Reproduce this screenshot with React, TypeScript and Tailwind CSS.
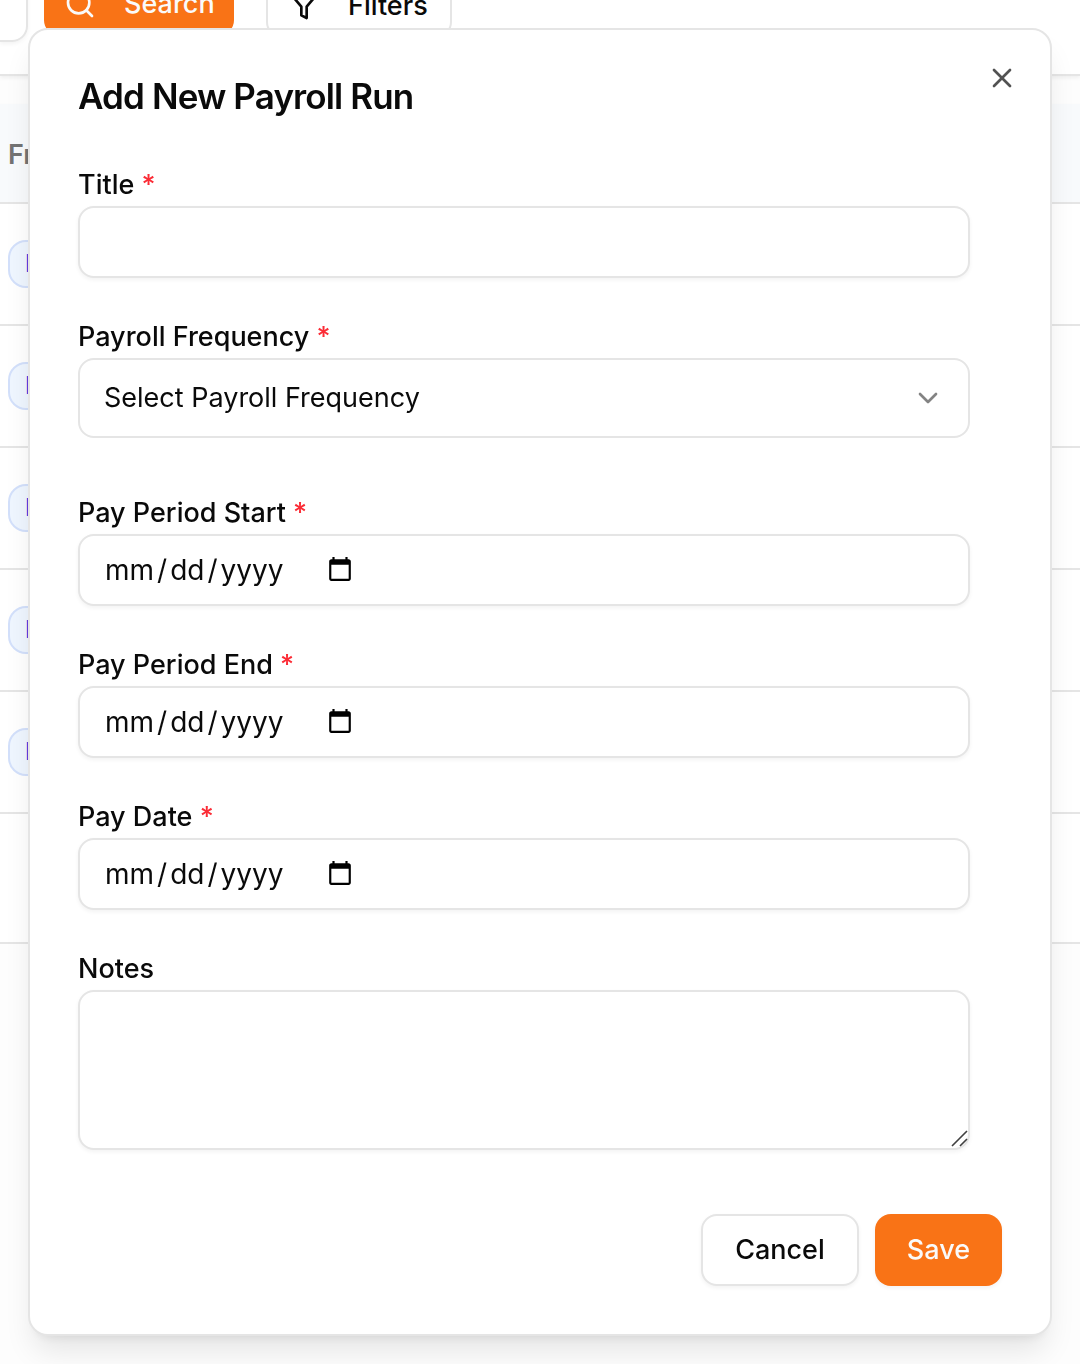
import { useState } from "react";
import type { ReactNode } from "react";
import { ChevronDown, X } from "lucide-react";

const control =
    "w-full rounded-2xl border-2 border-[#e5e5e5] bg-white px-6 text-[27px] text-[#0a0a0a] shadow-[0_2px_4px_rgba(0,0,0,0.05)] outline-none focus:border-orange-400";

const rows = [1, 2, 3, 4, 5];

function Field({ id, label, required, children }: { id: string; label: string; required?: boolean; children: ReactNode }) {
    return (
        <div className="flex flex-col gap-1.5">
            <label htmlFor={id} className="text-[27px] leading-[30px] font-medium">
                {label}
                {required && <span className="text-[#fb2c36]"> *</span>}
            </label>
            {children}
        </div>
    );
}

function DateField({ id, label }: { id: string; label: string }) {
    return (
        <Field id={id} label={label} required>
            <div className={`${control} flex h-18 items-center`}>
                <input
                    id={id}
                    type="date"
                    className="bg-transparent text-[28px] outline-none [&::-webkit-calendar-picker-indicator]:ml-2.5 [&::-webkit-datetime-edit-text]:px-0.5"
                />
            </div>
        </Field>
    );
}

function PayrollPage() {
    return (
        <div className="-mt-8 overflow-hidden">
            <div className="flex h-27 items-start border-b-2 border-[#e5e5e5] bg-white shadow-[0_2px_4px_rgba(0,0,0,0.06)]">
                <input
                    type="search"
                    aria-label="Search payroll runs"
                    className="h-[74px] w-7 rounded-r-2xl border-2 border-l-0 border-[#e5e5e5] shadow-[0_2px_4px_rgba(0,0,0,0.05)]"
                />
                <button type="button" className="ml-4 mt-1 flex h-16 w-[190px] items-center gap-7 rounded-2xl bg-[#f97316] pl-5 text-[27px] font-medium text-[#fafafa]">
                    <svg width="32" height="32" viewBox="0 0 24 24" fill="none" stroke="currentColor" strokeWidth="2" strokeLinecap="round" strokeLinejoin="round">
                        <circle cx="11" cy="11" r="8" />
                        <path d="m21 21-4.3-4.3" />
                    </svg>
                    Search
                </button>
                <button type="button" className="ml-8 mt-1.5 flex h-16 w-[186px] items-center gap-7 rounded-2xl border-2 border-[#e5e5e5] bg-white pl-5 text-[27px] font-medium">
                    <svg width="32" height="32" viewBox="0 0 24 24" fill="none" stroke="currentColor" strokeWidth="2" strokeLinecap="round" strokeLinejoin="round">
                        <polygon points="22 3 2 3 10 12.46 10 19 14 21 14 12.46 22 3" />
                    </svg>
                    Filters
                </button>
            </div>
            <div className="mt-7 border-b-2 border-[#e5e5e5] bg-white pb-32 shadow-[0_2px_4px_rgba(0,0,0,0.06)]">
                <table className="w-full border-collapse text-left">
                    <thead className="bg-[#f8fafc]">
                        <tr className="h-[99px] border-b-2 border-[#e5e5e5]">
                            <th className="px-2 pt-1 text-[27px] font-semibold text-[#737373]">Frequency</th>
                        </tr>
                    </thead>
                    <tbody>
                        {rows.map((r) => (
                            <tr key={r} className="h-[122px] border-b-2 border-[#e5e5e5]">
                                <td className="px-2">
                                    <span className="flex h-12 w-fit items-center rounded-[18px] border-2 border-[#d3e0fb] bg-[#eff6ff] px-[15px] text-2xl font-medium text-[#3b37e0]">
                                        Monthly
                                    </span>
                                </td>
                            </tr>
                        ))}
                    </tbody>
                </table>
            </div>
        </div>
    );
}

export default function App() {
    const [open, setOpen] = useState(true);
    const close = () => setOpen(false);

    return (
        <div className="min-h-screen overflow-hidden bg-[#fdfdfd] font-['Inter',sans-serif] text-[#0a0a0a]">
            <PayrollPage />

            {open && (
                <div className="fixed inset-0 overflow-auto p-7">
                    <div
                        role="dialog"
                        aria-labelledby="dialog-title"
                        className="relative rounded-[20px] border-2 border-[#e5e5e5] bg-white p-12 shadow-[0_20px_30px_-6px_rgba(0,0,0,0.1),0_8px_12px_-8px_rgba(0,0,0,0.1)]"
                    >
                        <button type="button" onClick={close} aria-label="Close" className="absolute top-8 right-8 opacity-70 hover:opacity-100">
                            <X size={32} />
                        </button>

                        <h2 id="dialog-title" className="text-[35px] leading-9 font-semibold tracking-tight">
                            Add New Payroll Run
                        </h2>

                        <form className="mt-14" onSubmit={(e) => e.preventDefault()}>
                            <div className="flex flex-col gap-11 pr-8">
                                <Field id="title" label="Title" required>
                                    <input id="title" type="text" className={`${control} h-18`} />
                                </Field>
                                <div className="pb-4">
                                    <Field id="frequency" label="Payroll Frequency" required>
                                        <div className="relative">
                                            <select id="frequency" className={`${control} h-20 appearance-none shadow-none`}>
                                                <option>Select Payroll Frequency</option>
                                            </select>
                                            <ChevronDown size={32} className="pointer-events-none absolute top-6 right-6.5 opacity-50" />
                                        </div>
                                    </Field>
                                </div>
                                <DateField id="start" label="Pay Period Start" />
                                <DateField id="end" label="Pay Period End" />
                                <DateField id="pay-date" label="Pay Date" />
                                <Field id="notes" label="Notes">
                                    <div className="relative">
                                        <textarea id="notes" className={`${control} block h-40 resize-y py-4 [&::-webkit-resizer]:hidden`} />
                                        <svg className="pointer-events-none absolute right-0.5 bottom-0.5" width="18" height="18" viewBox="0 0 18 18" stroke="#404040" strokeWidth="1.6">
                                            <path d="M2 16 17 1M10 16l7-7" />
                                        </svg>
                                    </div>
                                </Field>
                            </div>

                            <div className="mt-16 flex justify-end gap-4">
                                <button
                                    type="button"
                                    onClick={close}
                                    className="h-18 rounded-2xl border-2 border-[#e5e5e5] bg-white px-8 text-[27px] font-medium shadow-[0_2px_4px_rgba(0,0,0,0.05)]"
                                >
                                    Cancel
                                </button>
                                <button type="submit" className="h-18 rounded-2xl bg-[#f97316] px-8 text-[27px] font-medium text-[#fafafa] shadow-[0_2px_4px_rgba(0,0,0,0.05)]">
                                    Save
                                </button>
                            </div>
                        </form>
                    </div>
                </div>
            )}
        </div>
    );
}
